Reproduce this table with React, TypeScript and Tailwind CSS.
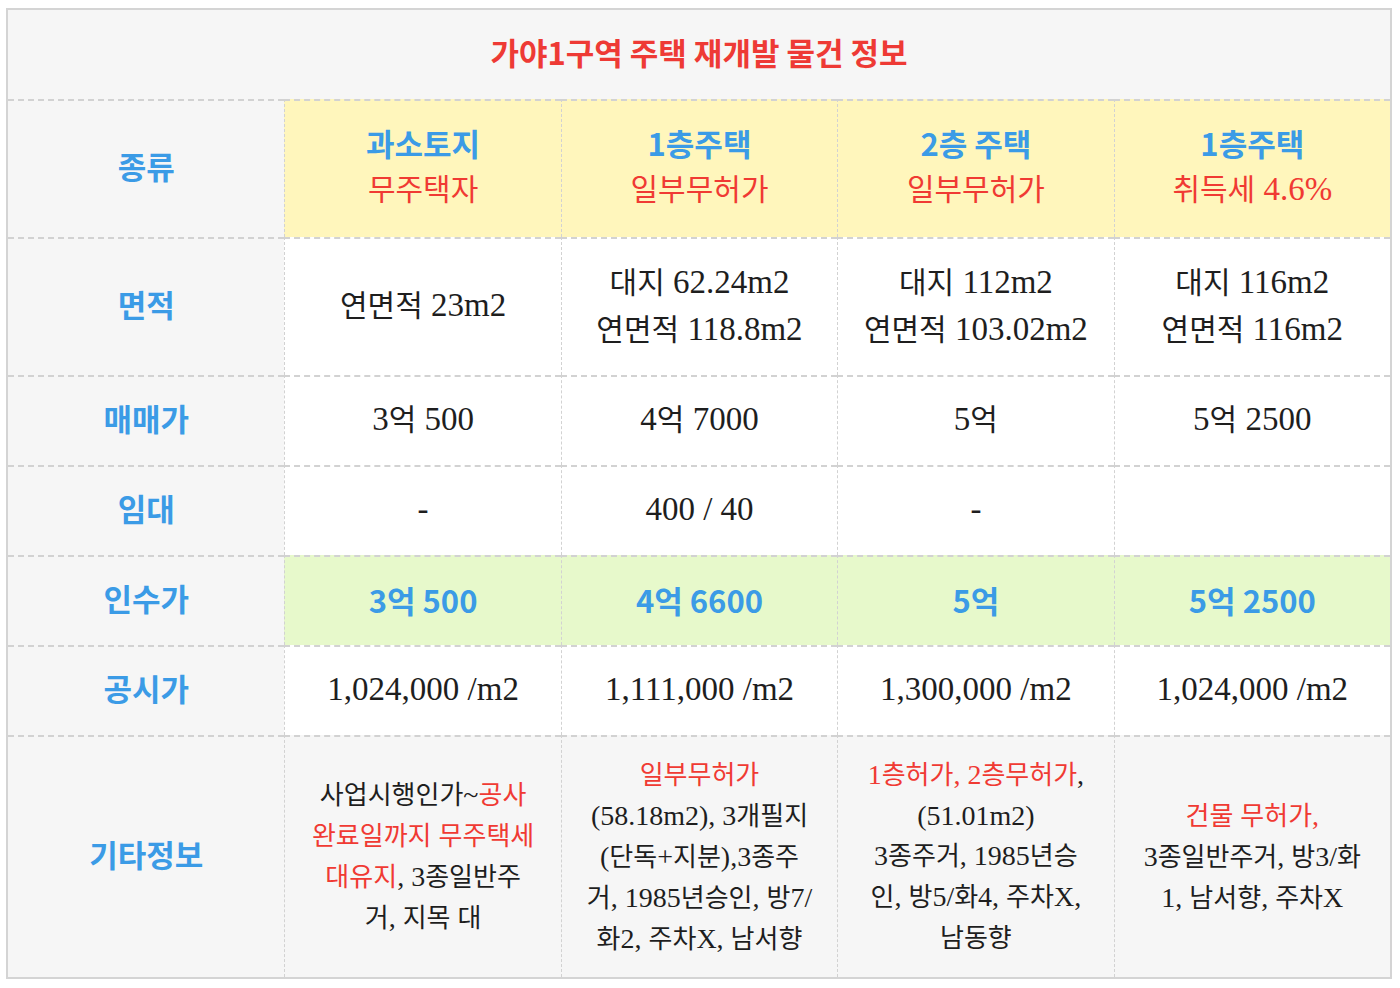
import React from "react";

const SERIF = "font-['Liberation_Serif','Noto_Sans_CJK_KR',serif]";
const SANS = "font-['Noto_Sans_CJK_KR',sans-serif]";

function Mixed({ text, ko }: { text: string; ko: string }) {
  const parts = text.split(/([\uAC00-\uD7A3]+)/);
  return (
    <>
      {parts.map((p, i) =>
        /[\uAC00-\uD7A3]/.test(p) ? (
          <span key={i} className={ko}>
            {p}
          </span>
        ) : (
          <React.Fragment key={i}>{p}</React.Fragment>
        )
      )}
    </>
  );
}

type CellProps = {
  children?: React.ReactNode;
  first?: boolean;
  bg: string;
  h: string;
  pb?: string;
};

function Cell({ children, first, bg, h, pb = "pb-[3px]" }: CellProps) {
  return (
    <div
      className={`${h} ${bg} ${pb} border-t-2 border-dashed border-[#d2d2d2] ${
        first ? "" : "border-l"
      } flex flex-col items-center justify-center text-center`}
    >
      {children}
    </div>
  );
}

function Label({ children }: { children: React.ReactNode }) {
  return (
    <span className={`${SANS} font-bold text-[31px] text-[#3b9be6] leading-none pb-[5px]`}>
      {children}
    </span>
  );
}

function Val({ children, red }: { children: string; red?: boolean }) {
  return (
    <span
      className={`${SERIF} text-[33px] ${
        red ? "text-[#f03a33]" : "text-[#1e1e1e]"
      } leading-[47px] whitespace-nowrap`}
    >
      <Mixed text={children} ko="text-[30px]" />
    </span>
  );
}

function Blue({ children }: { children: React.ReactNode }) {
  return (
    <span className={`${SANS} font-bold text-[31px] text-[#3b9be6] leading-[47px] whitespace-nowrap`}>
      {children}
    </span>
  );
}

function Red({ children }: { children: string }) {
  return (
    <span className="text-[#f03a33]">
      <Mixed text={children} ko="text-[26px]" />
    </span>
  );
}

function Info({ lines }: { lines: React.ReactNode[] }) {
  return (
    <div className={`${SERIF} text-[28px] leading-[40px] text-[#1e1e1e]`}>
      {lines.map((l, i) => (
        <div key={i} className="whitespace-nowrap">
          {typeof l === "string" ? <Mixed text={l} ko="text-[26px]" /> : l}
        </div>
      ))}
    </div>
  );
}

export default function App() {
  const W = "bg-white";
  const G = "bg-[#f6f6f6]";
  const Y = "bg-[#fff6bc]";
  const GR = "bg-[#e7f9cb]";
  const h138 = "h-[138px]";
  const h90 = "h-[90px]";
  const h242 = "h-[242px]";

  const types = [
    { a: "과소토지", b: "무주택자" },
    { a: "1층주택", b: "일부무허가" },
    { a: "2층 주택", b: "일부무허가" },
    { a: "1층주택", b: "취득세 4.6%" },
  ];

  const K = (s: string) => <Mixed text={s} ko="text-[26px]" />;

  return (
    <div className="w-[1400px] h-[988px] bg-white pt-[8px] pl-[6px]">
      <div className="w-[1386px] border-2 border-[#d4d4d4]">
        <div className="h-[89px] bg-[#f6f6f6] flex items-center justify-center pb-[5px]">
          <span className={`${SANS} font-bold text-[31px] text-[#ee3a35]`}>
            가야1구역 주택 재개발 물건 정보
          </span>
        </div>
        <div className="grid grid-cols-5">
          {/* 종류 */}
          <Cell first bg={G} h={h138}>
            <Label>종류</Label>
          </Cell>
          {types.map((t, i) => (
            <Cell key={i} bg={Y} h={h138} pb="pb-[6px]">
              <Blue>{t.a}</Blue>
              <Val red>{t.b}</Val>
            </Cell>
          ))}

          {/* 면적 */}
          <Cell first bg={G} h={h138}>
            <Label>면적</Label>
          </Cell>
          <Cell bg={W} h={h138}>
            <Val>연면적 23m2</Val>
          </Cell>
          <Cell bg={W} h={h138}>
            <Val>대지 62.24m2</Val>
            <Val>연면적 118.8m2</Val>
          </Cell>
          <Cell bg={W} h={h138}>
            <Val>대지 112m2</Val>
            <Val>연면적 103.02m2</Val>
          </Cell>
          <Cell bg={W} h={h138}>
            <Val>대지 116m2</Val>
            <Val>연면적 116m2</Val>
          </Cell>

          {/* 매매가 */}
          <Cell first bg={G} h={h90}>
            <Label>매매가</Label>
          </Cell>
          <Cell bg={W} h={h90}>
            <Val>3억 500</Val>
          </Cell>
          <Cell bg={W} h={h90}>
            <Val>4억 7000</Val>
          </Cell>
          <Cell bg={W} h={h90}>
            <Val>5억</Val>
          </Cell>
          <Cell bg={W} h={h90}>
            <Val>5억 2500</Val>
          </Cell>

          {/* 임대 */}
          <Cell first bg={G} h={h90}>
            <Label>임대</Label>
          </Cell>
          <Cell bg={W} h={h90}>
            <Val>-</Val>
          </Cell>
          <Cell bg={W} h={h90}>
            <Val>400 / 40</Val>
          </Cell>
          <Cell bg={W} h={h90}>
            <Val>-</Val>
          </Cell>
          <Cell bg={W} h={h90}>
            {null}
          </Cell>

          {/* 인수가 */}
          <Cell first bg={G} h={h90}>
            <Label>인수가</Label>
          </Cell>
          <Cell bg={GR} h={h90}>
            <Blue>3억 500</Blue>
          </Cell>
          <Cell bg={GR} h={h90}>
            <Blue>4억 6600</Blue>
          </Cell>
          <Cell bg={GR} h={h90}>
            <Blue>5억</Blue>
          </Cell>
          <Cell bg={GR} h={h90}>
            <Blue>5억 2500</Blue>
          </Cell>

          {/* 공시가 */}
          <Cell first bg={G} h={h90}>
            <Label>공시가</Label>
          </Cell>
          <Cell bg={W} h={h90}>
            <Val>1,024,000 /m2</Val>
          </Cell>
          <Cell bg={W} h={h90}>
            <Val>1,111,000 /m2</Val>
          </Cell>
          <Cell bg={W} h={h90}>
            <Val>1,300,000 /m2</Val>
          </Cell>
          <Cell bg={W} h={h90}>
            <Val>1,024,000 /m2</Val>
          </Cell>

          {/* 기타정보 */}
          <Cell first bg={G} h={h242}>
            <Label>기타정보</Label>
          </Cell>
          <Cell bg={G} h={h242} pb="pb-0">
            <Info
              lines={[
                <>
                  {K("사업시행인가~")}
                  <Red>공사</Red>
                </>,
                <Red>완료일까지 무주택세</Red>,
                <>
                  <Red>대유지</Red>
                  {K(", 3종일반주")}
                </>,
                "거, 지목 대",
              ]}
            />
          </Cell>
          <Cell bg={G} h={h242} pb="pb-0">
            <Info
              lines={[
                <Red>일부무허가</Red>,
                "(58.18m2), 3개필지",
                "(단독+지분),3종주",
                "거, 1985년승인, 방7/",
                "화2, 주차X, 남서향",
              ]}
            />
          </Cell>
          <Cell bg={G} h={h242} pb="pb-0">
            <Info
              lines={[
                <>
                  <Red>1층허가, 2층무허가</Red>,
                </>,
                "(51.01m2)",
                "3종주거, 1985년승",
                "인, 방5/화4, 주차X,",
                "남동향",
              ]}
            />
          </Cell>
          <Cell bg={G} h={h242} pb="pb-0">
            <Info
              lines={[
                <Red>건물 무허가,</Red>,
                "3종일반주거, 방3/화",
                "1, 남서향, 주차X",
              ]}
            />
          </Cell>
        </div>
      </div>
    </div>
  );
}
